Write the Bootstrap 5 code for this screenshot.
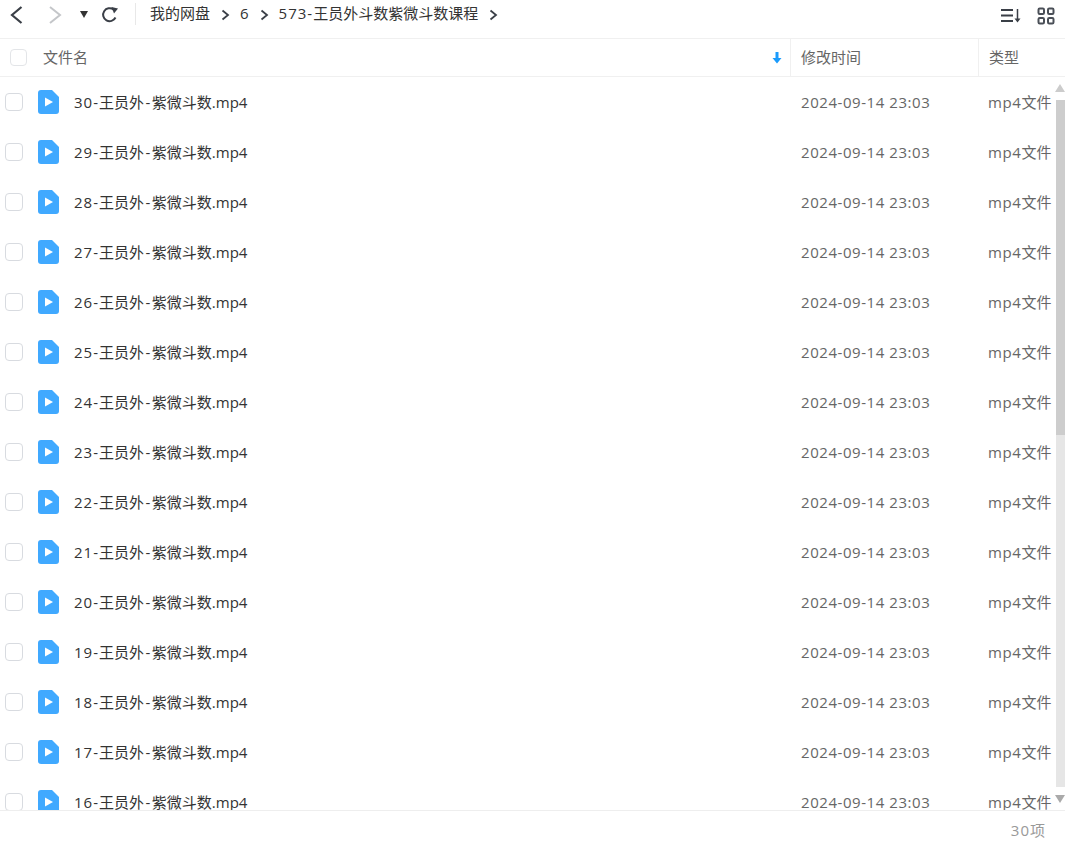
<!DOCTYPE html>
<html lang="zh">
<head>
<meta charset="utf-8">
<title>文件列表</title>
<link href="https://cdn.jsdelivr.net/npm/bootstrap@5.3.0/dist/css/bootstrap.min.css" rel="stylesheet">
<style>
html,body{height:100%;overflow:hidden;background:#fff}
body{font-family:"Open Sans","Noto Sans CJK SC",sans-serif;font-size:15px;color:#333}
.app-shell{height:849px}
.top-bar{height:39px;border-bottom:1px solid #f0f0f0;flex:none}
.nav-zone{width:135px;flex:none;position:relative}
.nav-btn{display:block;position:absolute}
.crumb-zone{border-left:1px solid #e8e8e8;height:22px;padding-left:14px;margin-top:3px;color:#333;font-size:15px;line-height:20px;white-space:nowrap}
.crumb-sep{margin:0 10px 0 11px;display:inline-block}
.wide-run{letter-spacing:1px}
.dash-run{letter-spacing:1.500px;padding-left:1.500px}
.tool-zone{gap:15px;padding-right:10px;margin-top:-6px}
.head-row{height:38px;border-bottom:1px solid #f0f0f0;flex:none;color:#666;font-size:15px}
.col-name{flex:1 1 auto;min-width:0}
.col-time{width:188px;flex:none;padding-left:10px}
.col-kind{width:87px;flex:none;padding-left:10px;white-space:nowrap}
.head-row .col-time,.head-row .col-kind{height:37px;line-height:37px;border-left:1px solid #f0f0f0}
.head-name{padding-left:10px;padding-right:8px}
.box-head{width:17px;height:17px;border:1px solid #e3e5e8;border-radius:4px;margin-right:16px;background:#fff}
.list-wrap{flex:1 1 auto;min-height:0;overflow:hidden;position:relative}
.file-row{height:50px;flex:none}
.box-row{width:18px;height:18px;border:1px solid #d8dbe0;border-radius:4px;margin-left:5px;margin-right:15px;background:#fff;flex:none}
.file-icon{flex:none;margin-right:15px}
.file-name{color:#333;white-space:nowrap}
.row-time,.row-kind{color:#666}
.row-time{letter-spacing:.56px;padding-left:11px}
.kind-run{letter-spacing:.6px}
.scroll-rail{position:absolute;top:0;right:0;width:9px;height:100%;background:#fff}
.rail-up{position:absolute;top:7px;left:-1px;width:0;height:0;border-left:5px solid transparent;border-right:5px solid transparent;border-bottom:8px solid #ccc}
.rail-down{position:absolute;bottom:7px;left:-1px;width:0;height:0;border-left:5px solid transparent;border-right:5px solid transparent;border-top:8px solid #aaa}
.rail-track{position:absolute;top:23px;left:0;right:0;height:687px;background:#e6e6e6}
.rail-thumb{position:absolute;top:0;left:0;right:0;height:335px;background:#cdcdcd}
.foot-bar{height:39px;border-top:1px solid #eee;flex:none;color:#999;padding-right:20px}
</style>
</head>
<body>
<div class="app-shell d-flex flex-column">
  <div class="top-bar d-flex align-items-center">
    <div class="nav-zone h-100">
      <svg class="nav-btn" style="left:9px;top:5px" width="14" height="20" viewBox="0 0 14 20"><path d="M12.500 2 3 10l9.500 8" fill="none" stroke="#3a3f47" stroke-width="2.200"/></svg>
      <svg class="nav-btn" style="left:48px;top:5px" width="14" height="20" viewBox="0 0 14 20"><path d="M2 2l10 8-10 8" fill="none" stroke="#c4c6c9" stroke-width="2"/></svg>
      <svg class="nav-btn" style="left:79px;top:10px" width="10" height="9" viewBox="0 0 10 9"><path d="M1 1h8L5 8z" fill="#333"/></svg>
      <svg class="nav-btn" style="left:101px;top:6px" width="18" height="18" viewBox="0 0 18 18"><path d="M14.500 11.500A6.500 6.500 0 1 1 12.500 3.500" fill="none" stroke="#3a3f47" stroke-width="2"/><path d="M10.500 1 17 2.500l-4 5z" fill="#3a3f47"/></svg>
    </div>
    <div class="crumb-zone flex-grow-1 align-self-start">我的网盘<span class="crumb-sep"><svg width="9" height="12" viewBox="0 0 9 12"><path d="M1.500 1.500 7 6l-5.500 4.500" fill="none" stroke="#3a3f47" stroke-width="1.800"/></svg></span>6<span class="crumb-sep"><svg width="9" height="12" viewBox="0 0 9 12"><path d="M1.500 1.500 7 6l-5.500 4.500" fill="none" stroke="#3a3f47" stroke-width="1.800"/></svg></span><span class="wide-run">573-</span>王员外斗数紫微斗数课程<span class="crumb-sep"><svg width="9" height="12" viewBox="0 0 9 12"><path d="M1.500 1.500 7 6l-5.500 4.500" fill="none" stroke="#3a3f47" stroke-width="1.800"/></svg></span></div>
    <div class="tool-zone d-flex align-items-center">
      <svg width="22" height="18" viewBox="0 0 22 18"><path d="M1 3h12M1 8.500h12M1 14h12" stroke="#3a3f47" stroke-width="1.800"/><path d="M17.500 2v11" stroke="#3a3f47" stroke-width="1.500"/><path d="M14.500 11.500h6l-3 4z" fill="#3a3f47"/></svg>
      <svg width="18" height="18" viewBox="0 0 18 18" fill="none" stroke="#4a4f57" stroke-width="2"><rect x="1.500" y="1.500" width="5.500" height="5.500" rx="1.200"/><rect x="11" y="1.500" width="5.500" height="5.500" rx="1.200"/><rect x="1.500" y="11" width="5.500" height="5.500" rx="1.200"/><rect x="11" y="11" width="5.500" height="5.500" rx="1.200"/></svg>
    </div>
  </div>
  <div class="head-row d-flex align-items-center">
    <div class="col-name head-name d-flex align-items-center">
      <span class="box-head"></span><span class="flex-grow-1">文件名</span>
      <svg width="10" height="13" viewBox="0 0 10 13"><path d="M3.500 1h3v6h3L5 12.500.5 7h3z" fill="#1a9bfc"/></svg>
    </div>
    <div class="col-time">修改时间</div>
    <div class="col-kind">类型</div>
  </div>
  <div class="list-wrap d-flex flex-column" id="fileList">
    <div class="scroll-rail"><div class="rail-up"></div><div class="rail-track"><div class="rail-thumb"></div></div><div class="rail-down"></div></div>
  </div>
  <div class="foot-bar d-flex align-items-center justify-content-end"><span><span class="wide-run">30</span>项</span></div>
</div>
<script>
var host=document.getElementById('fileList'),rail=host.firstElementChild;
for(var n=30;n>=16;n--){
  var r=document.createElement('div');
  r.className='file-row d-flex align-items-center';
  r.innerHTML='<div class="col-name d-flex align-items-center"><span class="box-row"></span><svg class="file-icon" width="21" height="24" viewBox="0 0 21 24"><path d="M3 0h11l7 7v14a3 3 0 0 1-3 3H3a3 3 0 0 1-3-3V3a3 3 0 0 1 3-3z" fill="#40a9ff"/><path d="M7 7.500v9l8-4.500z" fill="#fff"/></svg><span class="file-name"><span class="wide-run">'+n+'-</span>王员外<span class="dash-run">-</span>紫微斗数.mp4</span></div><div class="col-time row-time">2024-09-14 23:03</div><div class="col-kind row-kind"><span class="kind-run">mp4</span>文件</div>';
  host.insertBefore(r,rail);
}
</script>
<script src="https://cdn.jsdelivr.net/npm/bootstrap@5.3.0/dist/js/bootstrap.bundle.min.js"></script>
</body>
</html>
